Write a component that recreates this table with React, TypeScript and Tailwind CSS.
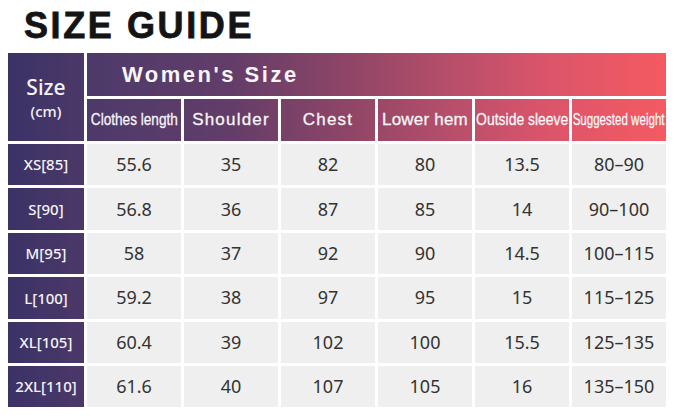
import { Fragment } from "react";

const sizes = ["XS[85]", "S[90]", "M[95]", "L[100]", "XL[105]", "2XL[110]"];

const rows = [
  ["55.6", "35", "82", "80", "13.5", "80-90"],
  ["56.8", "36", "87", "85", "14", "90-100"],
  ["58", "37", "92", "90", "14.5", "100-115"],
  ["59.2", "38", "97", "95", "15", "115-125"],
  ["60.4", "39", "102", "100", "15.5", "125-135"],
  ["61.6", "40", "107", "105", "16", "135-150"],
];

export default function App() {
  return (
    <div className="h-[418px] w-[676px] overflow-hidden bg-white font-['Liberation_Sans',Arial,sans-serif]">
      <h1 className="ml-[24px] pt-[8px] text-[36px] font-bold leading-[36px] tracking-[2.6px] text-[#141414] [-webkit-text-stroke:0.8px_#141414]">
        SIZE GUIDE
      </h1>

      <div className="ml-[8px] mt-[9px] w-[658px]">
        {/* header */}
        <div className="flex gap-[3px]">
          <div className="flex h-[88px] w-[76px] flex-col items-center justify-center bg-linear-to-r from-[#3b3266] to-[#4b3868] pt-[2px] font-['Noto_Sans',sans-serif] text-[#f4f2f7]">
            <span className="text-[21px] font-medium leading-[26px]">Size</span>
            <span className="text-[15px] font-medium leading-[22px]">(cm)</span>
          </div>
          <div className="flex h-[88px] w-[579px] flex-col bg-[linear-gradient(to_right,#4c3a6a_0%,#633d69_25%,#8f4566_45%,#b54e6a_62%,#dc556a_80%,#f45a61_100%)] text-[#f7f5f7]">
            <div className="flex h-[46px] items-center border-b-[3px] border-white pl-[35px] text-[22px] font-bold tracking-[2.5px]">
              Women's Size
            </div>
            <div className="flex flex-1 text-[17px] [-webkit-text-stroke:0.3px_#f7f5f7]">
              <div className="flex w-[94px] items-center justify-center">
                <span className="inline-block scale-x-[0.8] whitespace-nowrap">Clothes length</span>
              </div>
              <div className="flex w-[97px] items-center justify-center border-l-[3px] border-white tracking-[1.2px]">
                Shoulder
              </div>
              <div className="flex w-[97px] items-center justify-center border-l-[3px] border-white tracking-[1.2px]">
                Chest
              </div>
              <div className="flex w-[97px] items-center justify-center border-l-[3px] border-white tracking-[0.2px]">
                Lower hem
              </div>
              <div className="flex w-[97px] items-center justify-center border-l-[3px] border-white">
                <span className="inline-block scale-x-[0.82] whitespace-nowrap">Outside sleeve</span>
              </div>
              <div className="flex w-[97px] items-center justify-center border-l-[3px] border-white">
                <span className="inline-block scale-x-[0.68] whitespace-nowrap">Suggested weight</span>
              </div>
            </div>
          </div>
        </div>

        {/* body */}
        <div className="mt-[3px] grid auto-rows-[41.4px] grid-cols-[76px_repeat(6,94px)] gap-[3px] font-['Noto_Sans',sans-serif]">
          {rows.map((row, i) => (
            <Fragment key={sizes[i]}>
              <div className="flex items-center justify-center bg-linear-to-r from-[#3b3266] to-[#4b3868] text-[15px] font-medium text-[#f4f2f7]">
                {sizes[i]}
              </div>
              {row.map((v, j) => (
                <div key={j} className="flex items-center justify-center bg-[#efefef] text-[18px] text-[#333]">
                  {v.replace("-", "–")}
                </div>
              ))}
            </Fragment>
          ))}
        </div>
      </div>
    </div>
  );
}
